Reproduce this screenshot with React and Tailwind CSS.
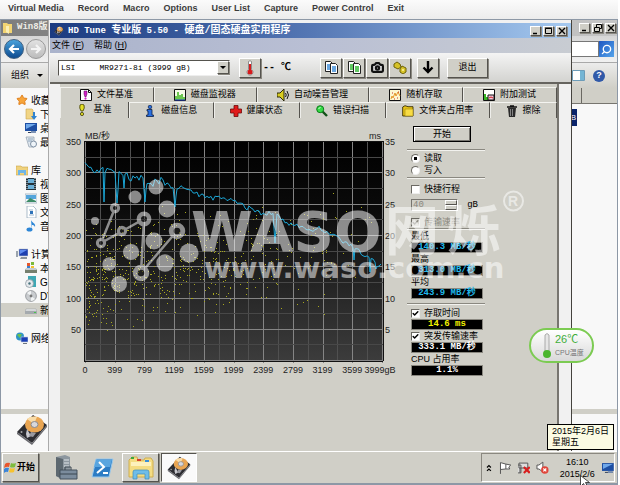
import React from 'react';
import { Search, Star, Camera, Check } from 'lucide-react';

const CN = "font-['Liberation_Sans','Noto_Sans_CJK_SC',sans-serif]";
const MONO = "font-['Liberation_Mono','Noto_Sans_CJK_SC',monospace]";
const RAISED =
  'border border-t-white border-l-white border-r-[#55534e] border-b-[#55534e] bg-[#d0cfc7] shadow-[1px_1px_0_#8a8880]';

/* ---------- icons ---------- */

function DiskIcon({ className }) {
  return (
    <svg viewBox="0 0 32 32" className={className} aria-hidden="true">
      <path d="M17 1 31 11 16 29 1 18Z" fill="#2c2c31" />
      <path d="M1 18 16 29v2L1 20ZM31 11 16 29v2l15-18Z" fill="#6b6b70" />
      <ellipse cx="18.500" cy="10.500" rx="9.500" ry="8" fill="#e9a552" />
      <path d="M18 10 11 5a10 8 0 0 1 10-2Z" fill="#f9dca8" />
      <ellipse cx="18.500" cy="10.500" rx="3.500" ry="3" fill="#d8d8dc" stroke="#8b8b90" />
      <path d="m11 15 4 7-4 2-1-4Z" fill="#c9c9ce" />
      <path d="m15 18 5 1-3 4-4-1Z" fill="#98989f" />
      <circle cx="5.500" cy="18" r="1" fill="#aaa" />
    </svg>
  );
}

function Monitor({ className }) {
  return (
    <svg viewBox="0 0 12 12" className={className} aria-hidden="true">
      <path d="M0 1h12v8H0Z" fill="#1d4ea3" />
      <path d="M1 2h10L1 7Z" fill="#6fa8ea" />
      <path d="M3 10h8v1H3Z" fill="#33425c" />
      <path d="M6 9h5v2H6Z" fill="#7d93b5" />
    </svg>
  );
}

function NavIcon({ kind }) {
  const c = 'size-3 shrink-0';
  switch (kind) {
    case 'star':
      return <Star className={c} fill="#f7a53a" color="#e07f1c" strokeWidth={2} />;
    case 'down':
      return (
        <svg viewBox="0 0 12 12" className={c}>
          <path d="M1 1h6l1 1v9H1Z" fill="#f1d586" stroke="#caa64a" strokeWidth=".600" />
          <path d="M8 4h2v4h2l-3 4-3-4h2Z" fill="#2f83cf" />
        </svg>
      );
    case 'desk':
      return <Monitor className={c} />;
    case 'recent':
      return (
        <svg viewBox="0 0 12 12" className={c}>
          <path d="M1 1h8v10H4Z" fill="#dfe7ee" stroke="#8c9bab" strokeWidth=".700" />
          <path d="M3 3h5M3 5h4" stroke="#8fa6bd" />
          <circle cx="8.500" cy="8" r="3" fill="#eef4f9" stroke="#7e8fa2" />
        </svg>
      );
    case 'lib':
      return (
        <svg viewBox="0 0 12 12" className={c}>
          <path d="M0 2h5l1 1h6v8H0Z" fill="#efd27e" stroke="#c9a548" strokeWidth=".600" />
          <path d="M2 6h8v5H8V9H4v2H2Z" fill="#6fb5e6" />
        </svg>
      );
    case 'video':
      return (
        <svg viewBox="0 0 12 12" className={c}>
          <path d="M1 0h10v12H1Z" fill="#24333c" />
          <path d="M3 1h6v4H3ZM3 7h6v4H3Z" fill="#6bb0d8" />
          <path d="M2 0v12M10 0v12" stroke="#d9e2e8" strokeDasharray="1 1" />
        </svg>
      );
    case 'pic':
      return (
        <svg viewBox="0 0 12 12" className={c}>
          <path d="M0 2h12v9H0Z" fill="#f4f7fa" stroke="#8da0b3" strokeWidth=".700" />
          <path d="M1 3h10v4H1Z" fill="#55a5dc" />
          <path d="m1 10 4-4 6 3v1Z" fill="#3d8b66" />
        </svg>
      );
    case 'doc':
      return (
        <svg viewBox="0 0 12 12" className={c}>
          <path d="M2 0h6l3 3v9H2Z" fill="#fff" stroke="#8ba0b6" strokeWidth=".700" />
          <path d="M4 4h4M4 9h5" stroke="#9db4cb" />
          <path d="M5 5h3v3H5Z" fill="#2f73b9" />
        </svg>
      );
    case 'music':
      return (
        <svg viewBox="0 0 12 12" className={c}>
          <path d="M6 0c1 3 5 3 4 7C9 5 8 5 7 5v5Z" fill="#2d86d6" />
          <ellipse cx="4.500" cy="9.500" rx="3" ry="2" fill="#2d86d6" />
        </svg>
      );
    case 'pc':
      return (
        <svg viewBox="0 0 12 12" className={c}>
          <path d="M0 3h2v6H0Z" fill="#9ba4ae" />
          <path d="M3 1h9v7H3Z" fill="#1d3fb0" stroke="#b9c2cc" strokeWidth=".600" />
          <path d="M4 2h7L4 6Z" fill="#5f8cf0" />
          <path d="M5 9h6v2H4Z" fill="#8b949e" />
        </svg>
      );
    case 'drive':
      return (
        <svg viewBox="0 0 12 12" className={c}>
          <path d="M0 7h12v4H0Z" fill="#76806f" />
          <path d="M1 6h10l1 2H0Z" fill="#c5ccd1" />
          <path d="M2 1h3v3H2Z" fill="#e5582b" />
          <path d="M6 0h3v3H6Z" fill="#7cb93a" />
          <path d="M2 4h3v2H2Z" fill="#3a7fd0" />
          <path d="M6 4h3v2H6Z" fill="#f3c02f" />
        </svg>
      );
    case 'cd':
      return (
        <svg viewBox="0 0 12 12" className={c}>
          <path d="M3 0h8v11H3Z" fill="#3fa8b4" />
          <circle cx="4.500" cy="7.500" r="4" fill="#e5e9ec" stroke="#86929b" strokeWidth=".700" />
          <circle cx="4.500" cy="7.500" r="1.200" fill="#49727c" />
        </svg>
      );
    case 'dvd':
      return (
        <svg viewBox="0 0 12 12" className={c}>
          <circle cx="6" cy="6" r="5.400" fill="#c9cccf" stroke="#8b8f93" strokeWidth=".800" />
          <path d="M6 6 2 3a5 5 0 0 1 4-2ZM6 6l4 3a5 5 0 0 1-4 2Z" fill="#f1f3f4" />
          <circle cx="6" cy="6" r="1.400" fill="#777" />
        </svg>
      );
    case 'vol':
      return (
        <svg viewBox="0 0 12 12" className={c}>
          <path d="M1 5h10l1 2H0Z" fill="#eceeef" stroke="#90959a" strokeWidth=".500" />
          <path d="M0 7h12v3H0Z" fill="#a5aaae" />
          <path d="M9 8h2v1H9Z" fill="#48c44b" />
        </svg>
      );
    default:
      return (
        <svg viewBox="0 0 12 12" className={c}>
          <circle cx="4" cy="4.500" r="4" fill="#2f93c8" />
          <path d="M1 3c2-2 3 0 5-1L4 6Z" fill="#6cc24a" />
          <path d="M5 5h7v5H5Z" fill="#1b3fb5" stroke="#c3cbd8" strokeWidth=".600" />
          <path d="M7 11h4v1H7Z" fill="#6f7780" />
        </svg>
      );
  }
}

function TabIcon({ kind }) {
  const c = 'size-3 shrink-0';
  switch (kind) {
    case 'filebench':
      return (
        <svg viewBox="0 0 12 12" className={c}>
          <path d="M.500.500h8l3 3v8H.500Z" fill="#fff" stroke="#111" />
          <path d="M8.500.500v3h3" fill="none" stroke="#111" />
          <path d="M4 2h3v3L6 8H5L4 5Z" fill="#d31fc8" stroke="#500b4c" strokeWidth=".500" />
          <circle cx="5.500" cy="9.600" r="1.100" fill="#d31fc8" />
        </svg>
      );
    case 'monitor':
      return (
        <svg viewBox="0 0 12 12" className={c}>
          <path d="M.500.500h11v11H.500Z" fill="#f6fbe9" stroke="#111" />
          <path d="M2 11V7M4 11V3M6 11V6M8 11V5M10 11V8" stroke="#3cb51d" strokeWidth="1.500" />
          <path d="M1 11h10" stroke="#2440c8" />
        </svg>
      );
    case 'sound':
      return (
        <svg viewBox="0 0 12 12" className={c}>
          <path d="M0 4h3l4-4v12L3 8H0Z" fill="#d8cc21" stroke="#1c1a02" strokeWidth=".900" />
          <path d="M8.500 4q1.500 2 0 4M10 2q3 4 0 8" fill="none" stroke="#111" />
        </svg>
      );
    case 'random':
      return (
        <svg viewBox="0 0 12 12" className={c}>
          <path d="M.500.500h11v11H.500Z" fill="#fdf7cf" stroke="#111" />
          <path d="m2 10 1-3 1 2 2-5 1 3 2-4 2 4" fill="none" stroke="#e5962b" />
          <path d="M3 4h1M8 9h1M5 10h1M9 3h1" stroke="#c62f2f" />
        </svg>
      );
    case 'extra':
      return (
        <svg viewBox="0 0 12 12" className={c}>
          <path d="M.500.500h11v11H.500Z" fill="#fff" stroke="#111" />
          <path d="M1 11V5h2v3h2v3Z" fill="#38b524" />
          <path d="M5 6h6v5H5Z" fill="#f3c8dd" stroke="#111" />
          <path d="m6 9 2-1 2 1" stroke="#c22" fill="none" />
        </svg>
      );
    case 'bench':
      return (
        <svg viewBox="0 0 12 12" className={c}>
          <path d="M4 1q2-2 4 0 1 3-1 6H5Q3 4 4 1Z" fill="#e3df25" stroke="#3b3904" strokeWidth=".800" />
          <circle cx="6" cy="10" r="1.600" fill="#e3df25" stroke="#3b3904" strokeWidth=".800" />
        </svg>
      );
    case 'info':
      return (
        <svg viewBox="0 0 12 12" className={c}>
          <circle cx="6" cy="2" r="1.800" fill="#2a6fe0" stroke="#0b2047" strokeWidth=".700" />
          <path d="M3 4.500h5V10h1.500v1.500h-7V10H4V6H3Z" fill="#2a6fe0" stroke="#0b2047" strokeWidth=".800" />
        </svg>
      );
    case 'health':
      return (
        <svg viewBox="0 0 12 12" className={c}>
          <path d="M4 .500h4V4h3.500v4H8v3.500H4V8H.500V4H4Z" fill="#e01b1b" stroke="#6d0a0a" strokeWidth=".800" />
        </svg>
      );
    case 'scan':
      return (
        <svg viewBox="0 0 12 12" className={c}>
          <path d="m6 6 5 5" stroke="#14521a" strokeWidth="2.400" />
          <circle cx="4.200" cy="4.200" r="3.500" fill="#35dc45" stroke="#0d7a1b" />
          <path d="m2.500 4 2-2" stroke="#d9ffdc" />
        </svg>
      );
    case 'folder':
      return (
        <svg viewBox="0 0 12 12" className={c}>
          <path d="M.700 2 3 .700l3 1h5V11H.700Z" fill="#e8c417" stroke="#3a3000" strokeWidth=".900" />
          <path d="M3 4h8v7H3Z" fill="#f8dc44" stroke="#8e7607" strokeWidth=".500" />
        </svg>
      );
    default:
      return (
        <svg viewBox="0 0 12 12" className={c}>
          <path d="M1 2h10M4 1h4" stroke="#111" strokeWidth="1.400" />
          <path d="M2 3h8l-1 9H3Z" fill="#2a2a2a" />
          <path d="M4.500 4v7M6.500 4v7" stroke="#aaa" strokeWidth=".700" />
        </svg>
      );
  }
}

function CopyIcon({ tint }) {
  return (
    <svg viewBox="0 0 13 13" className="size-[13px]" aria-hidden="true">
      <path d="M.500.500h5l2 2v8h-7Z" fill="#fff" stroke="#222" />
      <path d="M2 4h4M2 6h4M2 8h4" stroke={tint} strokeWidth="1.600" />
      <path d="M5.500 2.500h5l2 2v8h-7Z" fill="#fff" stroke="#222" />
      <path d="M7 6h4M7 8h4M7 10h4" stroke={tint} strokeWidth="1.600" />
    </svg>
  );
}

/* ---------- title-bar buttons ---------- */

function CaptionButton({ kind, label }) {
  return (
    <button type="button" aria-label={label} className={`flex h-[10px] w-[11px] items-center justify-center ${RAISED}`}>
      <svg viewBox="0 0 8 8" className="size-2" fill="none" stroke="#000">
        {kind === 'min' && <path d="M1 6.500h4" strokeWidth="1.500" />}
        {kind === 'max' && <path d="M.500 1.500h6v5h-6ZM0 1h7" />}
        {kind === 'restore' && <path d="M2.500 3V.500h5v4H6M.500 3.500h5v4h-5Z" />}
        {kind === 'close' && <path d="m1 1 6 6M7 1 1 7" strokeWidth="1.400" />}
      </svg>
    </button>
  );
}

/* ---------- explorer behind ---------- */

const NAV = [
  [['star', '收藏夹'], ['down', '下载', 1], ['desk', '桌面', 1], ['recent', '最近', 1]],
  [['lib', '库'], ['video', '视频', 1], ['pic', '图片', 1], ['doc', '文档', 1], ['music', '音乐', 1]],
  [['pc', '计算机'], ['drive', '本地', 1], ['cd', 'GB1', 1], ['dvd', 'DVD', 1], ['vol', '新加', 1, 1]],
  [['net', '网络']],
];

function Explorer() {
  return (
    <div className="flex h-full flex-col bg-[#f8f8f8]">
      <div className="flex h-4 shrink-0 items-center justify-between bg-linear-to-r from-[#7d7d7d] to-[#c6c6c6] pr-px pl-[2px]">
        <div className="flex items-center gap-1 text-[#eeede6]">
          <svg viewBox="0 0 10 12" className="h-3 w-[10px]">
            <path d="M0 1h4l1 1h4v9H0Z" fill="#f2d472" />
            <path d="M3 4h3v8l-3-2Z" fill="#fbeeb4" />
          </svg>
          <span className={`text-[9px] font-bold ${MONO}`}>Win8版</span>
        </div>
        <div className="flex gap-[2px]">
          <CaptionButton kind="min" label="最小化" />
          <CaptionButton kind="restore" label="还原" />
          <CaptionButton kind="close" label="关闭" />
        </div>
      </div>
      <div className="flex h-[27px] shrink-0 items-center justify-between border-b border-[#a9a9a9] bg-linear-to-b from-[#d6d6d6] to-[#f1f1f1] px-[3px]">
        <div className="flex gap-[2px]">
          <button type="button" aria-label="后退" className="flex size-5 items-center justify-center rounded-full border border-[#3f5f80] bg-linear-to-b from-[#4aa3dc] to-[#0d4a8f]">
            <svg viewBox="0 0 12 12" className="size-3" fill="none" stroke="#fff" strokeWidth="2.200"><path d="M11 6H2M6 2 2 6l4 4" /></svg>
          </button>
          <button type="button" aria-label="前进" className="flex size-5 items-center justify-center rounded-full border border-[#999] bg-linear-to-b from-[#e2e2e2] to-[#bcbcbc]">
            <svg viewBox="0 0 12 12" className="size-3" fill="none" stroke="#f4f4f4" strokeWidth="2.200"><path d="M1 6h9M6 2l4 4-4 4" /></svg>
          </button>
        </div>
        <div className="flex items-center">
          <input aria-label="搜索" className="h-4 w-[60px] border border-[#777] bg-white" />
          <button type="button" aria-label="搜索按钮" className="flex h-4 w-[15px] items-center justify-center bg-linear-to-br from-[#1f57c2] to-[#56a3ea]">
            <Search className="size-[11px] -scale-x-100" color="#fff" strokeWidth={3} />
          </button>
        </div>
      </div>
      <div className="flex h-[25px] shrink-0 items-center justify-between bg-linear-to-b from-[#ececec] to-[#d0cfc7] pr-3 pl-[10px]">
        <button type="button" className={`flex items-center gap-2 text-[9px] ${CN}`}>
          组织
          <span className="border-x-[3px] border-t-[3px] border-x-transparent border-t-black" />
        </button>
        <div className="flex items-center gap-2">
          <svg viewBox="0 0 13 11" className="h-[11px] w-[13px]">
            <path d="M.500.500h12v10H.500Z" fill="#fff" stroke="#6c9cb8" />
            <path d="M8 1h4v9H8Z" fill="#74b5d4" />
          </svg>
          <button type="button" aria-label="帮助" className="flex size-3 items-center justify-center rounded-full bg-[#3059a8] font-['Liberation_Sans',sans-serif] text-[9px] font-bold text-white">?</button>
        </div>
      </div>
      <div className="flex min-h-0 flex-1 justify-between">
        <nav className={`flex w-[60px] flex-col gap-[14px] pt-[5px] text-[10px] whitespace-nowrap ${CN}`}>
          {NAV.map((group, i) => (
            <ul key={i}>
              {group.map(([kind, text, sub, active]) => (
                <li key={text} className={active ? 'bg-[#d0cfc7]' : ''}>
                  <a href="#" className={`flex h-[14px] items-center gap-[3px] overflow-hidden ${sub ? 'pl-6' : 'pl-[15px]'}`}>
                    <NavIcon kind={kind} />
                    {text}
                  </a>
                </li>
              ))}
            </ul>
          ))}
        </nav>
        <div className="w-[80px]">
          <div className="flex h-4 justify-end border-b border-[#77756f] bg-[#d0cfc7]">
            <span className="w-9 border-l border-[#6a6862]" />
          </div>
          <div className={`mt-[5px] flex h-[17px] w-10 items-center justify-end bg-[#0a246a] pr-px text-[8px] text-white ${CN}`}>GB</div>
        </div>
      </div>
      <div className="h-[42px] shrink-0 border-t-[5px] border-[#d0cfc7] pl-[15px]">
        <DiskIcon className="size-8" />
      </div>
    </div>
  );
}

/* ---------- benchmark chart ---------- */

function makeRandom(seed) {
  let s = seed;
  return () => {
    s = (s * 1664525 + 1013904223) % 4294967296;
    return s / 4294967296;
  };
}

const BASE = [
  [85, 164], [90, 169], [97, 172], [103, 170], [115, 171], [125, 175], [133, 180], [145, 179], [155, 183],
  [160, 181], [170, 186], [185, 188], [200, 196], [215, 198], [232, 200], [245, 207], [262, 213], [273, 214],
  [280, 217], [290, 224], [300, 227], [310, 230], [320, 228], [330, 235], [345, 242], [352, 245], [358, 250],
  [364, 257], [373, 259], [377, 266], [382, 265],
];
const DIPS = { 104: 202, 117: 203, 118: 190, 124: 188, 145: 202, 146: 190, 175: 207, 176: 196, 275: 243, 276: 228, 354: 260, 370: 272, 376: 269 };

function buildCurve() {
  const rnd = makeRandom(11);
  const pts = [];
  let k = 0;
  for (let x = 85; x <= 382; x += 1) {
    while (k < BASE.length - 2 && x > BASE[k + 1][0]) k += 1;
    const [x0, y0] = BASE[k];
    const [x1, y1] = BASE[k + 1];
    const y = y0 + ((x - x0) / (x1 - x0)) * (y1 - y0);
    const amp = x > 102 && x < 165 ? 9 : 5;
    if (DIPS[x]) pts.push(`${x},${DIPS[x]}`);
    else if (x % 2 === 1) pts.push(`${x},${(y + (rnd() - 0.5) * amp).toFixed(1)}`);
  }
  return pts.join(' ');
}

function buildDots() {
  const rnd = makeRandom(77);
  const dots = [];
  while (dots.length < 640) {
    const x = 86 + Math.pow(rnd(), 1.2) * 292;
    const spread = (rnd() + rnd() + rnd()) / 3;
    const y = 205 + spread * 140 - (x - 86) * 0.1;
    if (y < 334 && rnd() > (x - 86) / 310) dots.push([Math.round(x), Math.round(y)]);
  }
  return dots;
}

const CURVE = buildCurve();
const DOTS = buildDots();
const COLS = Array.from({ length: 21 }, (_, i) => Math.round(85 + i * 14.85));
const ROWS = Array.from({ length: 15 }, (_, i) => Math.round(141 + i * 15.65));
const X_LABELS = ['0', '399', '799', '1199', '1599', '1999', '2399', '2799', '3199', '3599', '3999gB'];

function Chart() {
  return (
    <svg viewBox="60 118 346 262" className="h-[262px] w-[346px] shrink-0 font-['Liberation_Sans','Noto_Sans_CJK_SC',sans-serif] text-[9px]" role="img" aria-label="传输速率图">
      <defs>
        <linearGradient id="plot" x1="0" y1="0" x2="0" y2="1">
          <stop offset="0" stopColor="#000" />
          <stop offset=".300" stopColor="#0a0a0a" />
          <stop offset=".650" stopColor="#242424" />
          <stop offset="1" stopColor="#3c3c3c" />
        </linearGradient>
      </defs>
      <rect x="84" y="141" width="299" height="220" fill="url(#plot)" />
      <g shapeRendering="crispEdges">
        {COLS.map((x, i) => (
          <path key={x} d={`M${x + 0.5} 141V${i % 2 ? 362 : 363}`} stroke={i % 2 ? '#505050' : '#858585'} />
        ))}
        {ROWS.map((y, i) => (
          <path key={y} d={`M84 ${y + 0.5}H384`} stroke={i % 2 ? '#484848' : '#858585'} />
        ))}
        {DOTS.map(([x, y], i) => (
          <rect key={i} x={x} y={y} width="1" height="1" fill="#a8a81e" />
        ))}
        <path d="M84.500 141V361H383M383.500 141v220M84 141.500h299" fill="none" stroke="#111" />
      </g>
      <polyline points={CURVE} fill="none" stroke="#1ba6d6" strokeWidth="1" />
      <g fill="#222">
        <text x="85" y="139">MB/秒</text>
        <text x="381" y="139" textAnchor="end">ms</text>
        {[350, 300, 250, 200, 150, 100, 50].map((v, i) => (
          <text key={v} x="81" y={145 + i * 31.3} textAnchor="end">{v}</text>
        ))}
        {[35, 30, 25, 20, 15, 10, 5].map((v, i) => (
          <text key={v} x="385" y={145 + i * 31.3}>{v}</text>
        ))}
        {X_LABELS.map((v, i) => (
          <text key={v} x={i === 10 ? 380 : 85 + i * 29.7} y="373" textAnchor="middle">{v}</text>
        ))}
      </g>
    </svg>
  );
}

/* ---------- right-hand controls ---------- */

function Rule() {
  return <hr className="-ml-1 w-[78px] border-t border-b border-t-[#8a8880] border-b-[#f2f2ee]" />;
}

function Tick({ label, checked, disabled }) {
  return (
    <label className={`flex h-3 items-center gap-1 ${disabled ? 'text-[#8a8880]' : ''}`}>
      <span className="relative flex size-[9px] shrink-0">
        <input
          type="checkbox"
          defaultChecked={checked}
          disabled={disabled}
          className={`peer size-[9px] appearance-none border border-t-[#6b6963] border-r-[#eee] border-b-[#eee] border-l-[#6b6963] ${disabled ? 'bg-[#d9d8d2]' : 'bg-white'}`}
        />
        <Check className="pointer-events-none absolute inset-px hidden size-[7px] peer-checked:block" strokeWidth={5} />
      </span>
      {label}
    </label>
  );
}

function Radio({ label, checked }) {
  return (
    <label className="flex h-3 items-center gap-1">
      <input
        type="radio"
        name="mode"
        defaultChecked={checked}
        className="size-[9px] appearance-none rounded-full border border-t-[#6b6963] border-r-[#eee] border-b-[#eee] border-l-[#6b6963] bg-white bg-[radial-gradient(circle,#000_1.5px,transparent_2px)] not-checked:bg-none"
      />
      {label}
    </label>
  );
}

function Readout({ color, children }) {
  return (
    <output className={`flex h-[11px] w-[72px] items-center justify-center border border-[#8a8880] bg-black text-[9px] leading-none font-bold ${MONO} ${color}`}>
      {children}
    </output>
  );
}

function Controls() {
  return (
    <div className={`flex w-[78px] shrink-0 flex-col pt-2 pl-[5px] text-[9px] leading-3 whitespace-nowrap ${CN}`}>
      <button type="button" className="ml-[2px] flex h-4 w-[58px] items-center justify-center border border-black bg-[#d0cfc7] shadow-[inset_1px_1px_0_#fff,inset_-1px_-1px_0_#77756f]">开始</button>
      <div className="mt-[7px]"><Rule /></div>
      <div className="my-[1px]">
        <Radio label="读取" checked />
        <Radio label="写入" />
      </div>
      <Rule />
      <div className="mt-1"><Tick label="快捷行程" /></div>
      <div className={`mt-1 flex items-center justify-between pr-[6px] text-[9px] ${MONO}`}>
        <div className="flex h-3 w-[47px] items-center justify-between border border-t-[#77756f] border-r-white border-b-white border-l-[#77756f] text-[#8a8880]">
          <input aria-label="行程 gB" defaultValue="40" disabled className="w-6 bg-transparent pl-px" />
          <span className="flex h-full w-3 flex-col">
            <button type="button" aria-label="增加" disabled className="flex-1 border border-t-white border-r-[#55534e] border-b-[#55534e] border-l-white" />
            <button type="button" aria-label="减少" disabled className="flex-1 border border-t-white border-r-[#55534e] border-b-[#55534e] border-l-white" />
          </span>
        </div>
        <span>gB</span>
      </div>
      <div className="mt-[5px]"><Tick label="传输速率" checked disabled /></div>
      <Rule />
      <span className="h-3">最低</span>
      <Readout color="text-[#20b8ea]">140.3 MB/秒</Readout>
      <span className="h-3">最高</span>
      <Readout color="text-[#20b8ea]">313.0 MB/秒</Readout>
      <span className="h-3">平均</span>
      <Readout color="text-[#20b8ea]">243.9 MB/秒</Readout>
      <div className="mt-1 mb-[2px]"><Rule /></div>
      <Tick label="存取时间" checked />
      <Readout color="text-[#f2f200]">14.6 ms</Readout>
      <Tick label="突发传输速率" checked />
      <Readout color="text-white">333.1 MB/秒</Readout>
      <span className="h-3">CPU 占用率</span>
      <Readout color="text-white">1.1%</Readout>
    </div>
  );
}

/* ---------- HD Tune window ---------- */

function Tab({ icon, children, active }) {
  return (
    <button
      type="button"
      className={`flex items-center justify-center gap-[5px] border-r border-[#55534e] shadow-[inset_1px_0_0_#eeeeea] ${active ? '' : 'border-t border-t-[#f4f4f0]'}`}
    >
      <TabIcon kind={icon} />
      {children}
    </button>
  );
}

function ToolButton({ label, children }) {
  return (
    <button type="button" aria-label={label} className={`flex h-5 w-[22px] items-center justify-center ${RAISED}`}>
      {children}
    </button>
  );
}

function HdTune() {
  return (
    <section className="flex h-full flex-col border-r border-l border-r-[#45433e] border-l-[#aaa] bg-[#f1f1f1] pl-px">
      <header className="mt-[3px] flex h-[15px] shrink-0 items-center justify-between bg-linear-to-r from-[#1b3a80] via-[#5577b4] to-[#a6caf0] px-1 text-white">
        <h1 className={`flex items-center gap-1 text-[9px] font-bold whitespace-pre ${MONO}`}>
          <DiskIcon className="size-[10px]" />
          <span>HD Tune <span className="text-[10px]">专业版</span> 5.50 - <span className="text-[10px]">硬盘/固态硬盘实用程序</span></span>
        </h1>
        <div className="flex gap-[2px]">
          <CaptionButton kind="min" label="最小化" />
          <CaptionButton kind="max" label="最大化" />
          <CaptionButton kind="close" label="关闭" />
        </div>
      </header>
      <nav className={`flex h-[15px] shrink-0 items-center gap-[10px] bg-linear-to-r from-[#aab3cb] via-[#b9bfd4] to-[#c8ccd2] px-[2px] text-[9px] ${CN}`}>
        <button type="button">文件 (<u>F</u>)</button>
        <button type="button">帮助 (<u>H</u>)</button>
      </nav>
      <div className="flex h-[31px] shrink-0 items-center border-b-2 border-[#66645f] bg-linear-to-b from-[#f4f4f4] to-[#d3d3d0] px-2">
        <div className="relative flex w-[172px]">
          <select aria-label="硬盘" className={`block h-4 w-full appearance-none border border-t-[#55534e] border-r-[#eee] border-b-[#eee] border-l-[#55534e] bg-white pl-[2px] text-[8px] leading-3 whitespace-pre ${MONO}`}>
            <option>{'LSI\u00a0\u00a0\u00a0\u00a0\u00a0MR9271-8i (3999 gB)'}</option>
          </select>
          <span className={`pointer-events-none absolute top-px right-px flex h-[13px] w-3 items-center justify-center ${RAISED}`}>
            <span className="border-x-[3px] border-t-[3px] border-x-transparent border-t-black" />
          </span>
        </div>
        <div className="ml-[9px] flex items-center gap-[2px]">
          <ToolButton label="温度">
            <svg viewBox="0 0 10 16" className="h-4 w-[10px]">
              <path d="M3.500 1.500q1.500-1.500 3 0V9.500a3 3 0 1 1-3 0Z" fill="#fff" stroke="#777" strokeWidth=".800" />
              <path d="M5 4v8" stroke="#d61b1b" strokeWidth="2" />
              <circle cx="5" cy="12" r="2.500" fill="#d61b1b" />
            </svg>
          </ToolButton>
          <span className={`flex w-7 justify-between text-[10px] font-bold ${MONO}`}>
            <span>--</span>
            <span>℃</span>
          </span>
        </div>
        <div className="ml-[29px] flex gap-px">
          <ToolButton label="复制文本"><CopyIcon tint="#3a8ad6" /></ToolButton>
          <ToolButton label="复制图像"><CopyIcon tint="#2fb52f" /></ToolButton>
          <ToolButton label="截图"><Camera className="size-[13px]" fill="#ddd" color="#111" strokeWidth={4} /></ToolButton>
          <ToolButton label="选项">
            <svg viewBox="0 0 14 13" className="h-[13px] w-[14px]">
              <path d="M1 3 4 1l3 2 1 3-3 2-4-2Z" fill="#d6c227" stroke="#6d6107" />
              <path d="m7 8 2-3 4 2v4l-3 2-3-2Z" fill="#d6c227" stroke="#6d6107" />
              <circle cx="10" cy="9" r="1" fill="#fff6a0" />
            </svg>
          </ToolButton>
          <span className="w-1" />
          <ToolButton label="最小化到托盘">
            <svg viewBox="0 0 12 13" className="h-[13px] w-3" fill="none" stroke="#000" strokeWidth="2.400"><path d="M6 0v11M1.500 6.500 6 11l4.500-4.500" /></svg>
          </ToolButton>
        </div>
        <button type="button" className={`ml-2 flex h-5 w-[41px] items-center justify-center text-[9px] ${RAISED} ${CN}`}>退出</button>
      </div>
      <div className="flex min-h-0 flex-1 pr-3 pl-[10px]">
        <div className="flex flex-1 flex-col border-r-2 border-[#77756f] bg-[#d0cfc7]">
          <div className={`h-[34px] shrink-0 pt-[3px] text-[9px] ${CN}`}>
            <div className="grid h-[15px] grid-cols-[94fr_103fr_113fr_94fr_94fr]">
              <Tab icon="filebench">文件基准</Tab>
              <Tab icon="monitor">磁盘监视器</Tab>
              <Tab icon="sound">自动噪音管理</Tab>
              <Tab icon="random">随机存取</Tab>
              <Tab icon="extra">附加测试</Tab>
            </div>
            <div className="grid h-4 grid-cols-[69fr_85fr_86fr_87fr_104fr_67fr]">
              <Tab icon="bench" active>基准</Tab>
              <Tab icon="info">磁盘信息</Tab>
              <Tab icon="health">健康状态</Tab>
              <Tab icon="scan">错误扫描</Tab>
              <Tab icon="folder">文件夹占用率</Tab>
              <Tab icon="erase">擦除</Tab>
            </div>
          </div>
          <div className="flex items-start">
            <Chart />
            <Controls />
          </div>
        </div>
      </div>
    </section>
  );
}

/* ---------- translucent brand mark ---------- */

function Watermark() {
  return (
    <svg viewBox="0 0 620 485" className="pointer-events-none absolute top-0 left-0 h-[485px] w-[620px]" aria-hidden="true">
      <g opacity=".520" fill="#fff" stroke="none">
        {[
          [135, 197, 6.5], [156, 187, 7.5], [167, 209, 8.5], [154, 241, 8.5], [131, 252, 8], [109, 264, 6.7],
          [165, 263, 8.7], [189, 253, 9.5], [119, 284, 8], [95, 221, 4],
        ].map(([x, y, r]) => <circle key={`${x}-${y}`} cx={x} cy={y} r={r} />)}
        <path d="m115 208-14 35 43-24-3 54 36-42" fill="none" stroke="#fff" strokeWidth="2.500" />
        {[[115, 208, 3.6], [144, 219, 5.2], [177, 231, 5.8], [122, 231, 3.6], [101, 243, 3.6], [141, 273, 5.8]].map(([x, y, r]) => (
          <circle key={`${x}-${y}`} cx={x} cy={y} r={r} fill="#222" stroke="#fff" strokeWidth={r * 0.85} />
        ))}
        <text x="191" y="251" className="font-['DejaVu_Sans',sans-serif] text-[56px] font-bold">WASO</text>
        <text y="251" className="font-['Noto_Sans_CJK_SC',sans-serif] text-[54px] font-bold">
          <tspan x="385">网</tspan>
          <tspan x="447">烁</tspan>
        </text>
        <text x="204" y="278" className="font-['DejaVu_Sans',sans-serif] text-[29px] font-bold">www.waso.com.cn</text>
        <circle cx="513.500" cy="201" r="9.500" fill="none" stroke="#fff" strokeWidth="2" />
        <text x="513" y="206" textAnchor="middle" className="font-['Liberation_Sans',sans-serif] text-[14px] font-bold">R</text>
      </g>
    </svg>
  );
}

/* ---------- floating gadget, tooltip, taskbar ---------- */

function TempGadget() {
  return (
    <aside className={`absolute top-[328px] right-[26px] flex h-[35px] w-[65px] items-center gap-1 rounded-full border-2 border-[#7ccb52] bg-linear-to-b from-white to-[#d9d9d9] pl-3 ${CN}`}>
      <svg viewBox="0 0 8 27" className="h-[27px] w-2">
        <path d="M2 3q2-3 4 0v17H2Z" fill="#e6e6e6" stroke="#999" strokeWidth=".800" />
        <circle cx="4" cy="22" r="4" fill="#4bb52e" />
      </svg>
      <div className="flex flex-col whitespace-nowrap">
        <span className="text-[11px] leading-[15px] text-[#3fae3a]">26℃</span>
        <span className="text-[7px] leading-3 text-[#777]">CPU温度</span>
      </div>
    </aside>
  );
}

function Taskbar() {
  return (
    <footer className={`flex h-8 shrink-0 items-center justify-between border-t border-white bg-[#d0cfc7] pr-[2px] pl-px ${CN}`}>
      <div className="flex h-[29px] items-center">
        <button type="button" className={`flex h-full w-[37px] items-center gap-px pl-px text-[9px] font-bold whitespace-nowrap ${RAISED}`}>
          <svg viewBox="0 0 12 12" className="size-3 shrink-0">
            <path d="M1 2q2-2 5-1L5 5Q3 4 0 6Z" fill="#e8552b" />
            <path d="M7 1q2 1 5 0l-1 4q-3 1-5 0Z" fill="#7ebc3c" />
            <path d="M0 7q2-2 5-1l-1 4q-2-1-4 1Z" fill="#3a84d8" />
            <path d="M6 6q2 1 5 0l-1 4q-3 1-5 0Z" fill="#f6c22e" />
          </svg>
          开始
        </button>
        <button type="button" aria-label="服务器管理器" className="ml-[15px]">
          <svg viewBox="0 0 24 26" className="h-[26px] w-6">
            <path d="M2 2 11 0l5 2v18l-9 4-5-3Z" fill="#8d979f" />
            <path d="M2 2 9 4v20l-7-3Z" fill="#5d6870" />
            <path d="M10 5h5M10 8h5M10 11h5" stroke="#dfe5e9" />
            <path d="M6 15h17v9H6Z" fill="#7b8c9d" stroke="#44515d" />
            <path d="M11 15v-3h6v3M6 19h17" fill="none" stroke="#3b4751" />
          </svg>
        </button>
        <button type="button" aria-label="PowerShell" className="ml-[13px]">
          <svg viewBox="0 0 23 20" className="h-5 w-[23px]">
            <path d="M5 1h17l-4 18H1Z" fill="#2c7cc4" stroke="#9cc9ea" />
            <path d="M5 2h16l-2 7H3Z" fill="#59a5df" />
            <path d="m8 4 5 5-7 6M12 15h5" fill="none" stroke="#fff" strokeWidth="2" />
          </svg>
        </button>
        <button type="button" aria-label="资源管理器" className={`ml-2 flex h-full w-[37px] items-center justify-center ${RAISED}`}>
          <svg viewBox="0 0 26 24" className="h-6 w-[26px]">
            <path d="M1 4 4 1h5l1 3h6l1-2h6l2 3v16H1Z" fill="#f4dc82" stroke="#cfae4f" />
            <path d="M3 6h20v4H3Z" fill="#fdf1bd" />
            <path d="M3 2h3" stroke="#3ca83c" strokeWidth="2" />
            <path d="M9 4h4" stroke="#d8402b" strokeWidth="2" />
            <path d="M17 5h4" stroke="#3b8fd8" strokeWidth="2" />
            <path d="M5 23V16q0-2 2-2h12q2 0 2 2v7h-4v-5H9v5Z" fill="#6fbde8" stroke="#3c8cbc" strokeWidth=".700" />
          </svg>
        </button>
        <button type="button" aria-label="HD Tune" className="ml-[2px] flex h-full w-9 items-center justify-center border border-t-[#55534e] border-r-white border-b-white border-l-[#55534e] bg-[#fafafa]">
          <DiskIcon className="size-6" />
        </button>
      </div>
      <div className="flex h-[29px] w-[134px] items-center border border-t-[#8a8880] border-r-white border-b-white border-l-[#8a8880] pl-1">
        <svg viewBox="0 0 6 8" className="h-2 w-[6px]" fill="none" stroke="#000" strokeWidth="1.200"><path d="m1 3.500 2-2 2 2M1 7l2-2 2 2" /></svg>
        <svg viewBox="0 0 13 13" className="ml-[7px] size-[13px]" fill="#fff" stroke="#555"><path d="M1.500 13V1.500L7 3v5l-5 .500M7 3l5 1-2 2 1 2H7" /></svg>
        <svg viewBox="0 0 13 13" className="ml-[6px] size-[13px]">
          <path d="M1 2h9v5H1ZM2 7v5M0 4h3v8H0" fill="#ddd" stroke="#555" />
          <path d="m6 6 6 6m0-6-6 6" stroke="#d81e1e" strokeWidth="2.200" />
        </svg>
        <svg viewBox="0 0 13 13" className="ml-[6px] size-[13px]">
          <path d="M1 4h2l4-3v10L3 8H1Z" fill="#fff" stroke="#555" />
          <circle cx="9" cy="9" r="3.800" fill="#e0453a" />
          <path d="m7.500 7.500 3 3m0-3-3 3" stroke="#fff" strokeWidth="1.200" />
        </svg>
        <time className="ml-2 flex w-[41px] flex-col items-center text-[9px] leading-3">
          <span>16:10</span>
          <span>2015/2/6</span>
        </time>
        <Monitor className="ml-[5px] size-3" />
      </div>
    </footer>
  );
}

const MENU = ['Virtual Media', 'Record', 'Macro', 'Options', 'User List', 'Capture', 'Power Control', 'Exit'];

export default function App() {
  return (
    <main className="relative flex h-screen flex-col overflow-hidden bg-white pr-[2px] text-black">
      <nav className="flex h-[19px] shrink-0 items-center gap-[14px] bg-linear-to-b from-[#fbfbfb] to-[#ececec] pb-[2px] pl-2 font-['Liberation_Sans',sans-serif] text-[9px] font-bold whitespace-nowrap text-[#3c3c3c]">
        {MENU.map((m) => <button key={m} type="button">{m}</button>)}
      </nav>
      <div className="flex min-h-0 flex-1 flex-col border border-b-2 border-[#8d98a6]">
        <div className="relative min-h-0 flex-1">
          <Explorer />
          <div className="absolute inset-y-0 right-[45px] left-[47px]">
            <HdTune />
          </div>
        </div>
        <Taskbar />
      </div>
      <Watermark />
      <TempGadget />
      <div role="tooltip" className={`absolute right-[6px] bottom-[35px] w-[67px] border border-black bg-[#fbfbe3] py-px pl-1 text-[9px] leading-[11px] whitespace-nowrap ${CN}`}>
        2015年2月6日<br />星期五
      </div>
      <svg viewBox="0 0 10 14" className="absolute right-[30px] -bottom-[4px] h-[14px] w-[10px]" aria-hidden="true">
        <path d="M.500.500v11l3-3 2 4 2-1-2-4h4Z" fill="#fff" stroke="#222" strokeWidth=".800" />
      </svg>
    </main>
  );
}
